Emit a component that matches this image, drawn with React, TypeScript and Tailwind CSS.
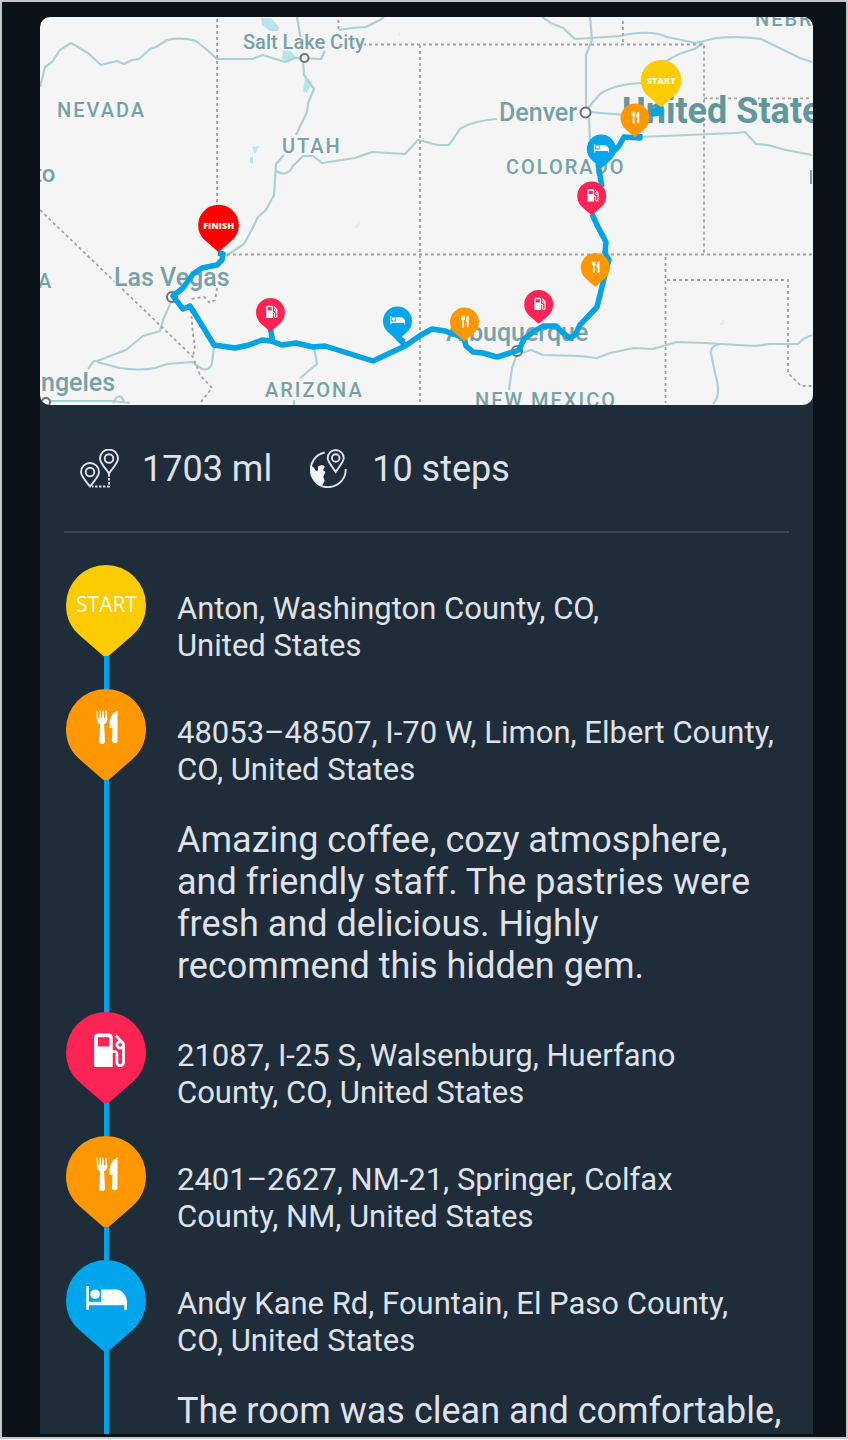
import React from 'react';

type StopKind = 'start' | 'food' | 'fuel' | 'bed' | 'finish';

type Stop = {
  kind: StopKind;
  address: string;
  review?: string;
};

const stops: Stop[] = [
  { kind: 'start', address: 'Anton, Washington County, CO, United\u00a0States' },
  {
    kind: 'food',
    address: '48053–48507, I-70 W, Limon, Elbert County, CO, United\u00a0States',
    review:
      'Amazing coffee, cozy atmosphere, and friendly staff. The pastries were fresh and delicious. Highly recommend this hidden gem.',
  },
  { kind: 'fuel', address: '21087, I-25 S, Walsenburg, Huerfano County, CO, United\u00a0States' },
  { kind: 'food', address: '2401–2627, NM-21, Springer, Colfax County, NM, United\u00a0States' },
  {
    kind: 'bed',
    address: 'Andy Kane Rd, Fountain, El Paso County, CO, United\u00a0States',
    review: 'The room was clean and comfortable,',
  },
];

// x / y is the centre of the round part of the pin
const mapPins: { kind: StopKind; x: number; y: number; r: number }[] = [
  { kind: 'food', x: 464.5, y: 322, r: 14.5 },
  { kind: 'bed', x: 397.5, y: 321, r: 14.5 },
  { kind: 'fuel', x: 270.5, y: 312.5, r: 14.5 },
  { kind: 'fuel', x: 538.7, y: 304.5, r: 14.5 },
  { kind: 'food', x: 595.3, y: 267.5, r: 14.5 },
  { kind: 'finish', x: 218.5, y: 225, r: 20.3 },
  { kind: 'fuel', x: 591.7, y: 196, r: 14.5 },
  { kind: 'bed', x: 601.3, y: 149, r: 14.5 },
  { kind: 'food', x: 635, y: 118, r: 14.5 },
  { kind: 'start', x: 661, y: 80.3, r: 20.3 },
];

const pinColors: Record<StopKind, string> = {
  start: '#fdcb02',
  food: '#ff9800',
  fuel: '#fb2455',
  bed: '#00a5ec',
  finish: '#fe0000',
};

// Drawn in an 80 x 93 box
const PinShape = ({ kind, bold = false }: { kind: StopKind; bold?: boolean }) => (
  <>
    <path
      fill={pinColors[kind]}
      d="M40 0A40 40 0 0 1 80 40C80 54 74 64 65 71.500L42 91.500Q40 93.500 38 91.500L15 71.500C6 64 0 54 0 40A40 40 0 0 1 40 0Z"
    />
    {(kind === 'start' || kind === 'finish') && (
      <text
        x="40.500"
        y="47"
        textAnchor="middle"
        fill="#fffbe6"
        className={
          bold
            ? "font-['Open_Sans',sans-serif] text-[18px] font-extrabold"
            : "font-['Open_Sans',sans-serif] text-[21px] font-normal"
        }
      >
        {kind === 'start' ? 'START' : 'FINISH'}
      </text>
    )}
    {kind === 'food' && (
      <g fill="#fff">
        <path d="M30.500 21.800h1.400l.4 7.500h1l.4-7.500h1.200l.3 7.500h.9l.3-7.500h1.200l.4 7.500h1l.4-7.500h1.300l.6 8.500c0 2.600-1.300 4.200-3.200 5l.9 17c0 1.700-1.200 2.600-2.900 2.600s-2.900-.9-2.900-2.600l.9-17c-2-.8-3.400-2.400-3.300-5z" />
        <path d="M51.500 21.800V51.500c0 1.700-1 2.800-2.700 2.800s-2.900-1-2.900-2.800l.7-12.500h-3c-.8-8.500 2-15.500 7.900-17.200z" />
      </g>
    )}
    {kind === 'fuel' && (
      <path
        fill="#fff"
        transform="translate(20.700 16) scale(1.860)"
        d="M19.770 7.230l.01-.01-3.720-3.720L15 4.560l2.110 2.110c-.94.36-1.610 1.260-1.610 2.330 0 1.380 1.120 2.500 2.500 2.500.36 0 .69-.08 1-.21v7.210c0 .55-.45 1-1 1s-1-.45-1-1V14c0-1.100-.9-2-2-2h-1V5c0-1.100-.9-2-2-2H6c-1.100 0-2 .9-2 2v16h10v-7.500h1.500v5c0 1.380 1.120 2.500 2.500 2.500s2.500-1.120 2.500-2.500V9c0-.69-.28-1.320-.73-1.770zM12 10H6V5h6v5zm6 0c-.55 0-1-.45-1-1s.45-1 1-1 1 .45 1 1-.45 1-1 1z"
      />
    )}
    {kind === 'bed' && (
      <g fill="#fff">
        <path d="M20.300 26h2.700v15.700h38v8h-2.700v-4.500H23v4.500h-2.700z" />
        <circle cx="29.200" cy="34.200" r="4.800" />
        <path d="M35.200 29.500H51c5.500 1 9 5.500 10 12v1H35.200z" />
      </g>
    )}
  </>
);

const RouteMap = () => (
  <svg viewBox="40 17 773 388" className="block w-full rounded-[10px] bg-[#f5f5f5]" role="img" aria-label="Route map">
    {/* Lakes */}
    <g fill="#b5e7ea">
      <path d="M261 18h10l8 9-1 4-8 0-8-6zM283 50l8 1 5 6-8 6-6-4zM305 78l7 4-5 11-4-2zM252 147l7-1-4 8zM250 157l3 0 0 7-3-2z" />
      <path d="M398 31l3 5h-2zM354 227l6-5-2 6zM719 325l6-6-2 6z" opacity="0.400" />
    </g>

    {/* Roads */}
    <g fill="none" stroke="#add0d3" strokeWidth="2.200" strokeLinejoin="round">
      <path d="M40 87L45 67 52 62 60 50 71 43 88 53 101 65 117 61 124 64 132 60 139 59 150 49 156 47 167 40Q182 37 196 41L206 49 217 59H252L263 55 285 62 295 58 321 59 325 51" />
      <path d="M297 17L301 40M303 60L304 75 314 89 308 103 307 112 296 135M284 155L276 164 274 195 266 210 258 217 249 235 244 244 226 256" />
      <path d="M276 171Q287 178 293 166L303 156 313 156 322 163 355 158 372 152 405 154 418 140 438 145 449 145 460 129Q472 121 497 119" />
      <path d="M339 30L352 28 366 27 380 20 384 17M542 17L551 23 563 28 575 39 591 38 620 36Q650 29 667 37L696 43 716 38Q742 36 761 39L800 58 812 62" />
      <path d="M590 17L592 40 586 55V108M588 108L600 94Q615 84 642 83M589 112L625 115M589 118L590 140M665 62Q680 52 695 49L703 43" />
      <path d="M640 137L735 133 745 132 756 144 768 145 786 150 812 155" />
      <path d="M171 302L163 320 160 331 143 336 126 350 97 361 94 361 88 369M97 362L120 368Q140 371 155 368L167 364 192 362 202 369Q210 371 212 363L214 347M314 347L317 364 300 378M294 400V405" />
      <path d="M517 354L512 368 509 390M522 353L531 350 543 355 580 356 597 358 610 353 634 348 653 349 677 342 705 343 755 346 770 344 798 344Q803 338 812 335M720 344Q710 346 711 353L715 373Q722 395 713 404" />
      <path d="M47 401H112L130 403M113 403Q119 391 124 401" />
    </g>

    {/* State borders */}
    <g fill="none" stroke="#a3a3a3" strokeWidth="1.800" strokeDasharray="3 3">
      <path d="M217 19V252M227 254.500H812M420 45V405M363 44.500H704V254M338.500 20V31M623 21V42M704 98.300H812M665.500 257V403M667 280H788V373L801 386H812" />
      <path d="M40 210L193 357 200 375 212 388 200 403M191 310L193 335 195 345 193 357M217 288L215 300 210 303 204 297 190 299" />
    </g>

    {/* Labels */}
    <g
      fill="#76a2a7"
      stroke="#f5f5f5"
      strokeWidth="3"
      strokeLinejoin="round"
      paintOrder="stroke"
      className="font-[Roboto,sans-serif] text-[20px] font-medium"
    >
      <text x="243" y="49">Salt Lake City</text>
      <text x="57" y="117" className="tracking-widest">NEVADA</text>
      <text x="282" y="153" className="tracking-widest">UTAH</text>
      <text x="265" y="397" className="tracking-widest">ARIZONA</text>
      <text x="475" y="407" className="tracking-widest">NEW MEXICO</text>
      <text x="506" y="174" className="tracking-widest">COLORADO</text>
      <text x="755" y="26" className="tracking-widest">NEBR</text>
      <text x="38" y="288">A</text>
      <text x="34" y="182" className="text-[24px]">to</text>
      <text x="114" y="286" className="text-[25px]">Las Vegas</text>
      <text x="41" y="391" className="text-[25px]">ngeles</text>
      <text x="499" y="121" className="text-[25px]">Denver</text>
      <text x="446" y="341" className="text-[25px]">Albuquerque</text>
      <text x="622" y="123" fill="#5f979d" className="text-[36px] font-bold">United State</text>
    </g>
    <path d="M811 170V184" stroke="#76a2a7" strokeWidth="2" />

    {/* City dots */}
    <g fill="#f5f5f5" stroke="#6d6f71" strokeWidth="2">
      <circle cx="304.500" cy="58" r="4" />
      <circle cx="585.500" cy="112.500" r="5" />
      <circle cx="172" cy="297" r="5" />
      <circle cx="517" cy="351" r="5" />
      <circle cx="46" cy="402" r="4" />
    </g>

    {/* Route */}
    <g fill="none" stroke="#04a3e3" strokeWidth="5.500" strokeLinejoin="round">
      <path d="M218 253L223 254 222 260 217 265 202 268 193 274 183 288 173 296 183 309 190 306 200 322 214 345 235 348 249 345 262 340 271 341 282 345 296 343 313 347 325 346 373 361 405 346 421 335 432 329 445 331 464 338 466 346 473 352 483 353 497 357 510 353 519 350 524 339 533 332 543 326 556 326 563 333 570 338 575 335 580 325 597 307 602 287 606 270 609 260 605 253 606 242 598 227 592 214" />
      <path d="M270.500 329L273 343M398 338L406 346M395 335L404 342" />
      <path d="M598 164L602 187M612 153L619 146 624 137 640 138 640 134" />
    </g>
    <path d="M650 110L660 105 663 107V115L652 117Z" fill="#04a3e3" />

    {mapPins.map((pin) => (
      <g
        key={`${pin.x}-${pin.y}`}
        transform={`translate(${pin.x - pin.r} ${pin.y - pin.r}) scale(${pin.r / 40})`}
      >
        <PinShape kind={pin.kind} bold />
      </g>
    ))}
  </svg>
);

const DistanceIcon = () => (
  <svg viewBox="0 0 40 40" className="size-10" fill="none" stroke="#dfe4ea" strokeWidth="1.900" aria-hidden="true">
    <path d="M10 37.500C6 32 1 27.500 1 23a9 9 0 0 1 18 0c0 4.500-5 9-9 14.500z" />
    <circle cx="10" cy="23" r="4.300" />
    <path d="M29 24.500C25 18.500 20 14 20 9.500a9 9 0 0 1 18 0c0 4.500-5 9-9 15z" />
    <circle cx="29" cy="9.500" r="4.300" />
    <path d="M29 25V37.500H12" strokeDasharray="2.500 1.500" />
  </svg>
);

const StepsIcon = () => (
  <svg viewBox="0 0 40 40" className="size-10" fill="none" stroke="#dfe4ea" strokeWidth="1.900" aria-hidden="true">
    <path d="M14.700 3.500A17.500 17.500 0 1 0 35.700 20" />
    <path d="M25.700 23C22 17 17.700 13 17.700 9a8 8 0 0 1 16 0c0 4-4.300 8-8 14z" />
    <circle cx="25.700" cy="9" r="3.800" />
    <path
      fill="#f1f4f7"
      stroke="none"
      d="M.9 16.300L4 18.700l1.300 2.600q1.400 1 2.700 0V17.700l3.300-1.700q3 0 3.400 1.700L13 21l2.300 2-2 4.700L14.700 32 12 37C6 35 0 28 .9 16.300z"
    />
  </svg>
);

const TripDetails = () => {
  return (
    <div className="border-2 border-[#c4c7ca] bg-[#0b1119] pt-[15px] pr-[33px] pb-[3px] pl-[38px] font-[Roboto,sans-serif] text-[#dfe2e8]">
      <main className="rounded-t-[10px] bg-[#1f2c3a]">
        <RouteMap />

        {/* Trip summary */}
        <div className="flex items-center gap-[38px] px-10 pt-11 pb-[42px] text-[36px] leading-10">
          <div className="flex items-center gap-[22px]">
            <DistanceIcon />
            <p>1703 ml</p>
          </div>
          <div className="flex items-center gap-[22px]">
            <StepsIcon />
            <p>10 steps</p>
          </div>
        </div>
        <hr className="mx-6 border-t-2 border-[#3c4a59]" />

        {/* Stops */}
        <ol className="px-[26px] pt-8">
          {stops.map((stop, i) => (
            <li key={i} className="group flex gap-[31px]">
              <div className="flex w-20 shrink-0 flex-col items-center">
                <svg viewBox="0 0 80 93" className="h-[93px] w-20" role="img" aria-label={stop.kind}>
                  <PinShape kind={stop.kind} />
                </svg>
                <div className="-mt-0.5 w-[5px] grow bg-[#04a3e3]" />
              </div>
              <div className="min-w-0 grow py-[25px] group-last:pb-0.5">
                <p className="pr-2.5 text-[31px] leading-[37px]">{stop.address}</p>
                {stop.review && <p className="mt-[31px] text-[36px] leading-[42px]">{stop.review}</p>}
              </div>
            </li>
          ))}
        </ol>
      </main>
    </div>
  );
};

export default TripDetails;
